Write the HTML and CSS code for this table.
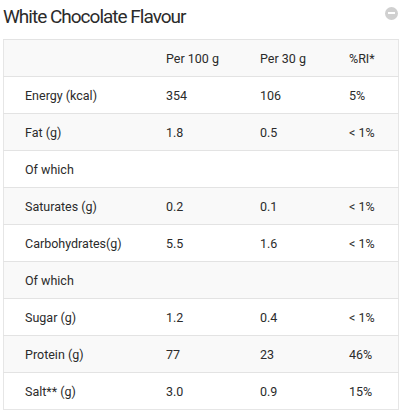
FILE: index.html
```html
<!DOCTYPE html>
<html>
<head>
<meta charset="utf-8">
<link rel="stylesheet" href="styles.css">
</head>
<body>
<div class="panel">
  <div class="head">
    <h2 class="title">White Chocolate Flavour</h2>
    <span class="toggle"><span class="bar"></span></span>
  </div>
  <table class="nutri">
    <tr class="odd"><td></td><td>Per 100 g</td><td>Per 30 g</td><td>%RI*</td></tr>
    <tr><td>Energy (kcal)</td><td>354</td><td>106</td><td>5%</td></tr>
    <tr class="odd"><td>Fat (g)</td><td>1.8</td><td>0.5</td><td>&lt; 1%</td></tr>
    <tr><td>Of which</td><td></td><td></td><td></td></tr>
    <tr class="odd"><td>Saturates (g)</td><td>0.2</td><td>0.1</td><td>&lt; 1%</td></tr>
    <tr><td>Carbohydrates(g)</td><td>5.5</td><td>1.6</td><td>&lt; 1%</td></tr>
    <tr class="odd"><td>Of which</td><td></td><td></td><td></td></tr>
    <tr><td>Sugar (g)</td><td>1.2</td><td>0.4</td><td>&lt; 1%</td></tr>
    <tr class="odd"><td>Protein (g)</td><td>77</td><td>23</td><td>46%</td></tr>
    <tr><td>Salt** (g)</td><td>3.0</td><td>0.9</td><td>15%</td></tr>
  </table>
</div>
</body>
</html>
```
FILE: styles.css
```css
html, body { margin: 0; padding: 0; background: #fff; }
body {
  font-family: Roboto, "Liberation Sans", sans-serif;
  color: #2b2b2b;
  padding: 0 9px 0 3px;
}
.head {
  display: flex;
  justify-content: space-between;
  align-items: center;
  height: 28px;
  margin-bottom: 11px;
}
.title {
  margin: 0;
  font-weight: 400;
  font-size: 19px;
  letter-spacing: -1px;
  color: #2b2b2b;
  padding-top: 4px;
}
.toggle {
  width: 13px;
  height: 13px;
  border-radius: 50%;
  background: #d0d0d0;
  display: flex;
  align-items: center;
  justify-content: center;
  margin-right: 0;
  margin-top: -2px;
}
.toggle .bar { width: 7px; height: 2px; background: #fff; }
.nutri {
  width: 396px;
  border-collapse: collapse;
  border: 1px solid #e6e6e6;
  font-size: 12.5px;
}
.nutri td {
  height: 36px;
  padding: 0;
  border-top: 1px solid #e3e3e3;
  vertical-align: middle;
}
.nutri tr.odd td { background: #f9f9f9; }
.nutri td:nth-child(1) { padding-left: 21px; width: 141px; }
.nutri td:nth-child(2) { width: 94px; }
.nutri td:nth-child(3) { width: 89px; }
```
